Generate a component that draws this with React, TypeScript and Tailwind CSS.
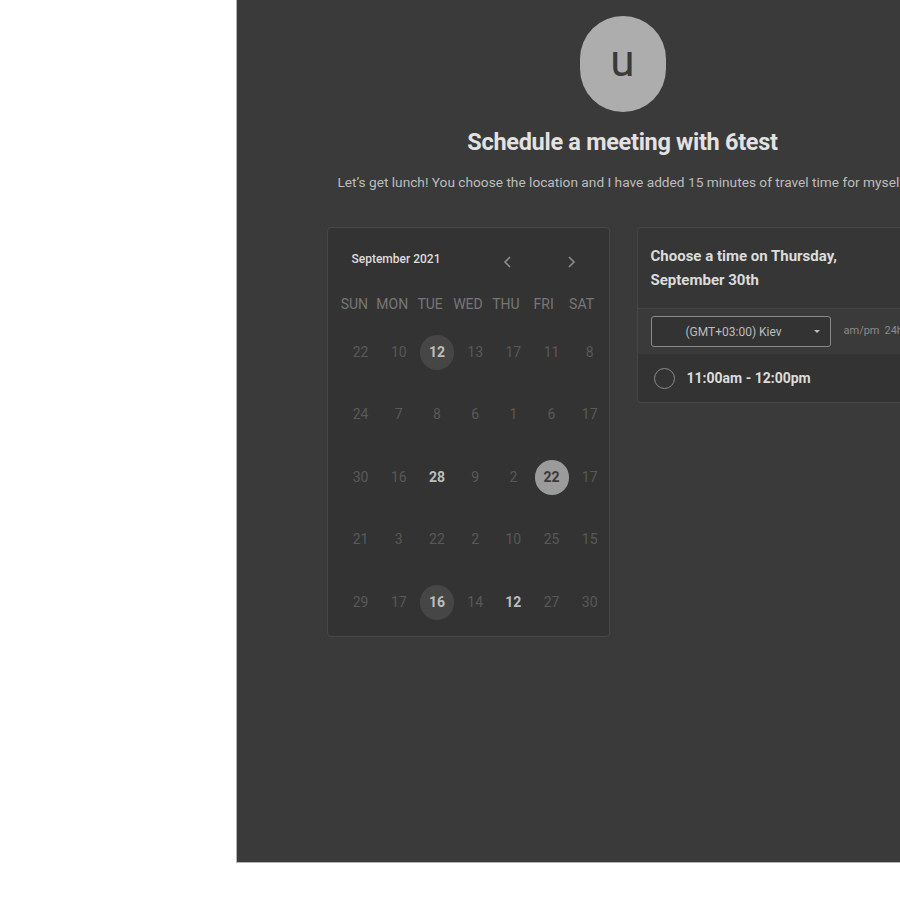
import React from "react";

const rows: { n: string; s?: "sel" | "hl" | "bold" | "dark" }[][] = [
  [{ n: "22" }, { n: "10" }, { n: "12", s: "hl" }, { n: "13" }, { n: "17" }, { n: "11" }, { n: "8" }],
  [{ n: "24" }, { n: "7" }, { n: "8" }, { n: "6" }, { n: "1" }, { n: "6" }, { n: "17" }],
  [{ n: "30" }, { n: "16" }, { n: "28", s: "bold" }, { n: "9" }, { n: "2" }, { n: "22", s: "sel" }, { n: "17" }],
  [{ n: "21" }, { n: "3" }, { n: "22" }, { n: "2" }, { n: "10" }, { n: "25" }, { n: "15" }],
  [{ n: "29" }, { n: "17" }, { n: "16", s: "hl" }, { n: "14" }, { n: "12", s: "bold" }, { n: "27" }, { n: "30" }],
];

const days = ["SUN", "MON", "TUE", "WED", "THU", "FRI", "SAT"];

function Cell({ n, s }: { n: string; s?: string }) {
  if (s === "sel") {
    return (
      <div className="flex items-center justify-center">
        <div className="w-[34px] h-[35px] rounded-full bg-[#9b9b9b] flex items-center justify-center text-[14px] font-bold text-[#3a3a3a]">
          {n}
        </div>
      </div>
    );
  }
  if (s === "hl") {
    return (
      <div className="flex items-center justify-center">
        <div className="w-[34px] h-[35px] rounded-full bg-[#464646] flex items-center justify-center text-[14px] font-bold text-[#bdbdbd]">
          {n}
        </div>
      </div>
    );
  }
  if (s === "bold") {
    return <div className="flex items-center justify-center text-[14px] font-bold text-[#bdbdbd]">{n}</div>;
  }
  return <div className="flex items-center justify-center text-[14px] text-[#595959]">{n}</div>;
}

export default function App() {
  return (
    <div className="w-full overflow-hidden bg-white h-[900px]" style={{ fontFamily: "Roboto, 'Noto Sans', sans-serif" }}>
      <div className="ml-[236px] w-[772px] h-[863px] bg-[#3a3a3a] border-l border-b border-[#b5b5b5] flex flex-col items-center">
        <div className="mt-[16px] w-[86px] h-[96px] rounded-full bg-[#adadad] flex items-center justify-center text-[44px] leading-none text-[#3a3a3a] pb-[6px]">
          u
        </div>
        <div className="mt-[15px] text-[23.5px] font-bold text-[#e2e2e2] leading-[30px] tracking-[-0.3px]">
          Schedule a meeting with 6test
        </div>
        <div className="mt-[15px] text-[13.7px] text-[#bdbdbd] leading-[20px] whitespace-nowrap">
          Let’s get lunch! You choose the location and I have added 15 minutes of travel time for myself.
        </div>
        <div className="mt-[35px] flex gap-[27px] items-start">
          {/* Calendar */}
          <div className="w-[283px] h-[410px] rounded-[4px] border border-[#474747] bg-[#333333] flex flex-col">
            <div className="h-[64px] flex items-start pl-[24px] pr-[30px] pt-[22px]">
              <div className="text-[12px] font-medium text-[#dcdcdc] leading-[18px]">September 2021</div>
              <div className="ml-auto flex gap-[47px] mt-[4px] text-[#8c8c8c]">
                <svg width="16" height="16" viewBox="0 0 16 16" fill="none" stroke="currentColor" strokeWidth="1.6">
                  <path d="M10 3 L5 8 L10 13" />
                </svg>
                <svg width="16" height="16" viewBox="0 0 16 16" fill="none" stroke="currentColor" strokeWidth="1.6">
                  <path d="M6 3 L11 8 L6 13" />
                </svg>
              </div>
            </div>
            <div className="px-[8px] grid grid-cols-7 h-[24px] items-center text-[14px] text-[#777777]">
              {days.map((d) => (
                <div key={d} className="text-center">{d}</div>
              ))}
            </div>
            <div className="pl-[14px] mt-[5px] flex flex-col">
              {rows.map((r, i) => (
                <div key={i} className="grid grid-cols-[repeat(7,38.2px)] h-[62.5px] items-center">
                  {r.map((c, j) => (
                    <Cell key={j} n={c.n} s={c.s} />
                  ))}
                </div>
              ))}
            </div>
          </div>
          {/* Time picker */}
          <div className="w-[282px] rounded-[4px] border border-[#474747] bg-[#363636] flex flex-col">
            <div className="px-[13px] pt-[16px] pb-[16px] text-[15px] font-bold leading-[24px] text-[#dcdcdc] border-b border-[#444444]">
              Choose a time on Thursday,
              <br />
              September 30th
            </div>
            <div className="h-[45px] bg-[#3a3a3a] flex items-center pl-[13px]">
              <div className="w-[180px] h-[31px] rounded-[3px] border border-[#8a8a8a] bg-[#333333] flex items-center pl-[34px] pr-[10px] text-[12px] text-[#bdbdbd]">
                <span>(GMT+03:00) Kiev</span>
                <span className="ml-auto w-0 h-0 border-l-[3px] border-r-[3px] border-t-[3px] border-l-transparent border-r-transparent border-t-[#bdbdbd]" />
              </div>
              <span className="ml-[13px] text-[11px] text-[#8a8a8a]">am/pm</span>
              <span className="ml-[5px] text-[11px] text-[#8a8a8a]">24h</span>
            </div>
            <div className="h-[48px] bg-[#333333] flex items-center pl-[16px] rounded-b-[4px]">
              <div className="w-[21px] h-[21px] rounded-full border-[1.5px] border-[#8c8c8c]" />
              <span className="ml-[12px] text-[14px] font-bold text-[#dcdcdc]">11:00am - 12:00pm</span>
            </div>
          </div>
        </div>
      </div>
    </div>
  );
}
